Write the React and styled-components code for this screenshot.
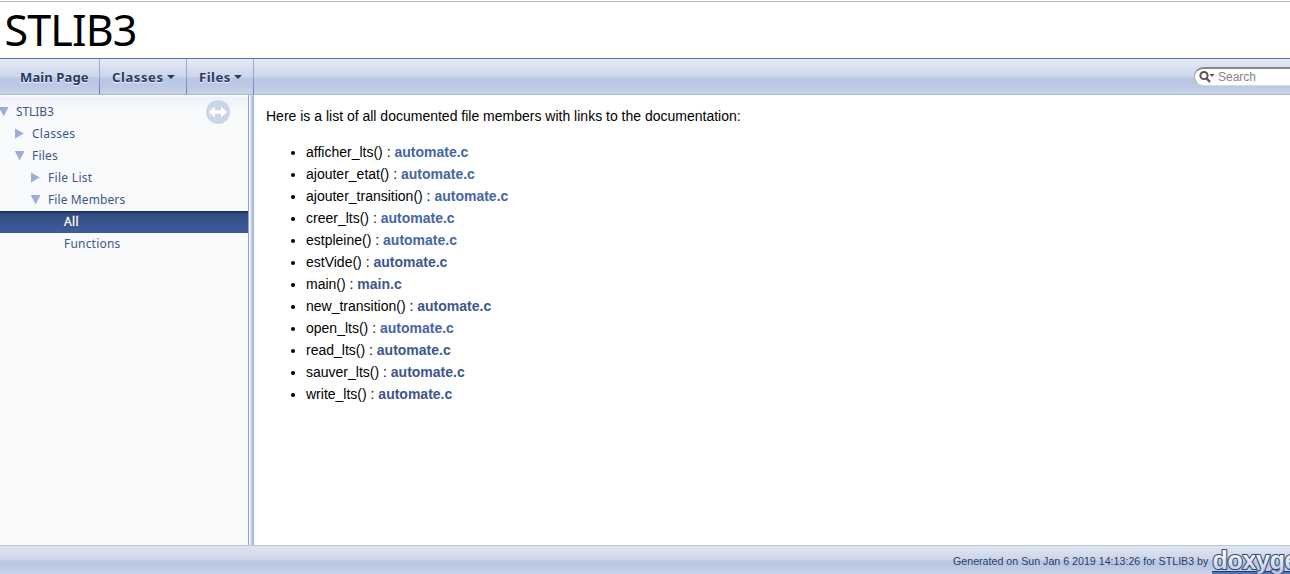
import React from "react";
import styled, { createGlobalStyle } from "styled-components";

const GlobalStyle = createGlobalStyle`
  * { box-sizing: border-box; }
  body {
    margin: 0;
    overflow: hidden;
    background: #fff;
    color: #000;
    font: 14px/22px "Liberation Sans", Arial, sans-serif;
  }
`;

const Page = styled.div`
  display: flex;
  flex-direction: column;
  width: 1290px;
  height: 574px;
  overflow: hidden;
`;

const TitleArea = styled.header`
  height: 58px;
  flex: none;
  border-top: 1px solid #fff;
  box-shadow: inset 0 1px #b3b3b3;
  padding-left: 4.5px;
`;

const ProjectName = styled.h1`
  margin: 0;
  font: 400 43px/58px "Noto Sans", Tahoma, sans-serif;
  letter-spacing: -0.85px;
  white-space: nowrap;
`;

const NavBar = styled.nav`
  display: flex;
  flex: none;
  height: 37px;
  border-top: 1px solid #4f74bd;
  border-bottom: 1px solid #a8b8d9;
  background: linear-gradient(#e7ebf5 0, #dae0ef 8px, #ccd5ea 18px, #b9c7e3 19px, #bbc9e5 27px, #cad4ea 35px);
`;

const Tab = styled.a`
  display: flex;
  align-items: center;
  width: ${(p) => p.$width}px;
  padding-left: ${(p) => p.$pad}px;
  border-right: 1px solid;
  border-image: linear-gradient(#a3b4d7, #8ea4d0 50%, #5b7bbf) 1;
  color: #283a5d;
  font: 700 13px/36px "Noto Sans", "Lucida Grande", sans-serif;
  letter-spacing: ${(p) => p.$spacing || 0}px;
  text-shadow: 0 1px 1px rgba(255, 255, 255, 0.9);
  white-space: nowrap;
`;

const Caret = styled.span`
  margin-left: 3px;
  border: 4px solid transparent;
  border-top-color: #283a5d;
  border-bottom: 0;
`;

const SearchBox = styled.div`
  display: flex;
  align-items: center;
  width: 96px;
  height: 19px;
  margin: 8px 0 0 auto;
  padding-left: 4px;
  border: 1px solid #a5a9b3;
  border-top: 2px solid #858890;
  border-right: 0;
  border-bottom-color: #d5dae5;
  border-radius: 10px 0 0 10px;
  background: #fff;
  color: #858585;
  font-size: 12px;
  line-height: 16px;
  svg { flex: none; margin-right: 3px; }
`;

const Body = styled.div`
  display: flex;
  flex: 1;
  min-height: 0;
`;

const Sidebar = styled.aside`
  position: relative;
  width: 248px;
  padding-top: 6px;
  background: linear-gradient(#fff 0, #fff 1px, #eef1f8 2px, #f9fafc 15px);
`;

const SyncIcon = styled.svg`
  position: absolute;
  top: 5px;
  left: 206px;
`;

const TreeRow = styled.div`
  display: flex;
  align-items: center;
  height: 22px;
  padding-left: ${(p) => p.$level * 16}px;
  color: ${(p) => (p.$selected ? "#fff" : "#3d578c")};
  background: ${(p) => (p.$selected ? "linear-gradient(#1b2a48 0, #2b4173 2px, #344f86 4px, #3d5a9b 20px)" : "none")};
  text-shadow: ${(p) => (p.$selected ? "0 1px 1px #000" : "none")};
  -webkit-text-stroke: ${(p) => (p.$selected ? "0.4px #fff" : "0")};
  font: 12px/22px "Noto Sans", "Lucida Grande", sans-serif;
  letter-spacing: ${(p) => p.$spacing}px;
  white-space: nowrap;
`;

const ArrowSlot = styled.svg`
  flex: none;
  width: 16px;
  height: 22px;
  overflow: visible;
`;

const Splitter = styled.div`
  width: 6px;
  background: linear-gradient(90deg, #8fa5d2 0 1px, #f4f6fb 1px 2px, #dce3f1 2px 3px, #c5d0e8 3px 4px, #b4c3e1 4px 5px, #9eb2d9 5px 6px);
`;

const Contents = styled.main`
  flex: 1;
  padding: 10px 0 0 12px;
`;

const Intro = styled.p`
  margin: 0 0 14px;
`;

const MemberList = styled.ul`
  margin: 0;
  padding: 0 0 0 40px;
`;

const Member = styled.li`
  height: 22px;
`;

const FileLink = styled.a`
  color: ${(p) => (p.$visited ? "#3d578c" : "#4665a2")};
  font-weight: 700;
`;

const Footer = styled.footer`
  display: flex;
  flex: none;
  height: 29px;
  padding-left: 953px;
  border-top: 1px solid #b9c5df;
  background: linear-gradient(#dfe5f1 0, #ccd5e9 14px, #b9c7e3 15px, #bac8e4 20px, #cad4ea 28px);
  color: #2a3d61;
  font-size: 10.67px;
  line-height: 31px;
  white-space: nowrap;
`;

const FooterText = styled.span`
  flex: none;
  width: 258px;
`;

const DoxygenLogo = styled.svg`
  flex: none;
  width: 79px;
  height: 28px;
`;

const tree = [
  { label: "STLIB3", level: 0, open: true, spacing: -0.1 },
  { label: "Classes", level: 1, open: false, spacing: 0.25 },
  { label: "Files", level: 1, open: true, spacing: 0.2 },
  { label: "File List", level: 2, open: false, spacing: 0.3 },
  { label: "File Members", level: 2, open: true, spacing: 0.1 },
  { label: "All", level: 4, selected: true, spacing: 0.4 },
  { label: "Functions", level: 4, spacing: 0.2 },
];

const members = [
  ["afficher_lts", "automate.c"],
  ["ajouter_etat", "automate.c"],
  ["ajouter_transition", "automate.c"],
  ["creer_lts", "automate.c"],
  ["estpleine", "automate.c"],
  ["estVide", "automate.c", true],
  ["main", "main.c", true],
  ["new_transition", "automate.c", true],
  ["open_lts", "automate.c"],
  ["read_lts", "automate.c", true],
  ["sauver_lts", "automate.c", true],
  ["write_lts", "automate.c", true],
];

function TreeArrow({ open }) {
  return (
    <ArrowSlot viewBox="0 0 16 22">
      <path d={open ? "M-1.2 6H8.5L3.7 15.5Z" : "M-1 5.5V15.5L7.8 10.5Z"} fill="#9aaed9" />
    </ArrowSlot>
  );
}

export default function App() {
  return (
    <Page>
      <GlobalStyle />
      <TitleArea>
        <ProjectName>STLIB3</ProjectName>
      </TitleArea>
      <NavBar>
        <Tab $width={100} $pad={20} $spacing={0.12}>Main Page</Tab>
        <Tab $width={87} $pad={12} $spacing={0.6}>Classes<Caret /></Tab>
        <Tab $width={67} $pad={12} $spacing={0.5}>Files<Caret /></Tab>
        <SearchBox>
          <svg width="16" height="14" viewBox="0 0 16 14" fill="none">
            <circle cx="5" cy="5.5" r="3.6" stroke="#555" strokeWidth="2" />
            <path d="M7.7 8.5L11 12" stroke="#555" strokeWidth="2.3" />
            <path d="M10.5 4H15.5L13 7Z" fill="#555" />
          </svg>
          Search
        </SearchBox>
      </NavBar>
      <Body>
        <Sidebar>
          <SyncIcon width="24" height="24" viewBox="0 0 24 24">
            <circle cx="12" cy="12" r="12" fill="#cbd5ea" />
            <path d="M2.5 12L9 6.5V10.2H15V6.5L21.5 12L15 17.5V13.8H9V17.5Z" fill="#fff" />
          </SyncIcon>
          {tree.map((item) => (
            <TreeRow key={item.label} $level={item.level} $selected={item.selected} $spacing={item.spacing}>
              {item.open !== undefined && <TreeArrow open={item.open} />}
              {item.label}
            </TreeRow>
          ))}
        </Sidebar>
        <Splitter />
        <Contents>
          <Intro>Here is a list of all documented file members with links to the documentation:</Intro>
          <MemberList>
            {members.map(([name, file, visited]) => (
              <Member key={name}>
                {name}() : <FileLink $visited={visited}>{file}</FileLink>
              </Member>
            ))}
          </MemberList>
        </Contents>
      </Body>
      <Footer>
        <FooterText>Generated on Sun Jan 6 2019 14:13:26 for STLIB3 by</FooterText>
        <DoxygenLogo viewBox="0 0 79 28">
          <defs>
            <linearGradient id="letters" x1="0" y1="0" x2="0" y2="1">
              <stop offset="0.2" stopColor="#fff" />
              <stop offset="1" stopColor="#b5c5e6" />
            </linearGradient>
          </defs>
          <rect x="1" y="25" width="78" height="3" fill="#5373b8" />
          <rect x="1" y="25" width="78" height="1" fill="#283a5d" />
          <text
            x="1.5"
            y="23"
            fontFamily="Liberation Sans, sans-serif"
            fontSize="25"
            fontWeight="700"
            textLength="101"
            lengthAdjust="spacing"
            fill="url(#letters)"
            stroke="#34496f"
            strokeWidth="2.2"
            strokeLinejoin="round"
            paintOrder="stroke"
          >
            doxygen
          </text>
        </DoxygenLogo>
      </Footer>
    </Page>
  );
}
